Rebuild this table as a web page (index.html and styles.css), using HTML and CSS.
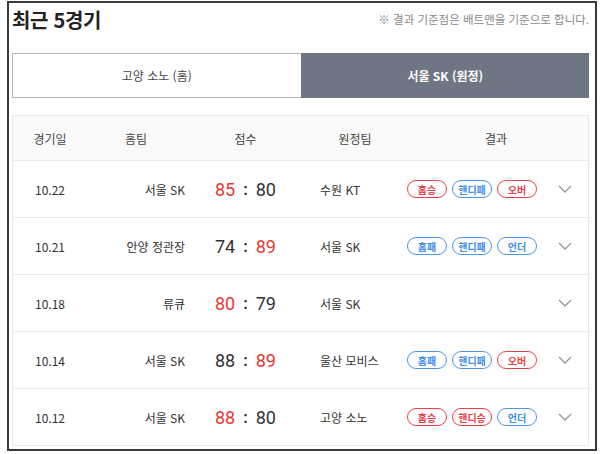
FILE: index.html
```html
<!DOCTYPE html>
<html lang="ko">
<head>
<meta charset="utf-8">
<link rel="stylesheet" href="styles.css">
</head>
<body>
<div class="frame">
  <div class="top">
    <h1 class="title">최근 5경기</h1>
    <p class="note">※ 결과 기준점은 배트맨을 기준으로 합니다.</p>
  </div>
  <div class="tabs">
    <div class="tab">고양 소노 (홈)</div>
    <div class="tab active">서울 SK (원정)</div>
  </div>
  <div class="card">
    <div class="row head">
      <div class="c-date">경기일</div>
      <div class="c-home">홈팀</div>
      <div class="c-score">점수</div>
      <div class="c-away">원정팀</div>
      <div class="c-res">결과</div>
    </div>
    <div class="row">
      <div class="c-date">10.22</div>
      <div class="c-home">서울 SK</div>
      <div class="c-score"><span class="win">85</span><b>:</b><span>80</span></div>
      <div class="c-away">수원 KT</div>
      <div class="c-res"><div class="badges"><span class="bd red">홈승</span><span class="bd blue">핸디패</span><span class="bd red">오버</span></div><span class="chev"><svg width="14" height="8" viewBox="0 0 14 8"><path d="M1 1l6 6 6-6" fill="none" stroke="#9a9a9a" stroke-width="1.4"/></svg></span></div>
    </div>
    <div class="row">
      <div class="c-date">10.21</div>
      <div class="c-home">안양 정관장</div>
      <div class="c-score"><span>74</span><b>:</b><span class="win">89</span></div>
      <div class="c-away">서울 SK</div>
      <div class="c-res"><div class="badges"><span class="bd blue">홈패</span><span class="bd blue">핸디패</span><span class="bd blue">언더</span></div><span class="chev"><svg width="14" height="8" viewBox="0 0 14 8"><path d="M1 1l6 6 6-6" fill="none" stroke="#9a9a9a" stroke-width="1.4"/></svg></span></div>
    </div>
    <div class="row">
      <div class="c-date">10.18</div>
      <div class="c-home">류큐</div>
      <div class="c-score"><span class="win">80</span><b>:</b><span>79</span></div>
      <div class="c-away">서울 SK</div>
      <div class="c-res"><div class="badges"></div><span class="chev"><svg width="14" height="8" viewBox="0 0 14 8"><path d="M1 1l6 6 6-6" fill="none" stroke="#9a9a9a" stroke-width="1.4"/></svg></span></div>
    </div>
    <div class="row">
      <div class="c-date">10.14</div>
      <div class="c-home">서울 SK</div>
      <div class="c-score"><span>88</span><b>:</b><span class="win">89</span></div>
      <div class="c-away">울산 모비스</div>
      <div class="c-res"><div class="badges"><span class="bd blue">홈패</span><span class="bd blue">핸디패</span><span class="bd red">오버</span></div><span class="chev"><svg width="14" height="8" viewBox="0 0 14 8"><path d="M1 1l6 6 6-6" fill="none" stroke="#9a9a9a" stroke-width="1.4"/></svg></span></div>
    </div>
    <div class="row">
      <div class="c-date">10.12</div>
      <div class="c-home">서울 SK</div>
      <div class="c-score"><span class="win">88</span><b>:</b><span>80</span></div>
      <div class="c-away">고양 소노</div>
      <div class="c-res"><div class="badges"><span class="bd red">홈승</span><span class="bd red">핸디승</span><span class="bd blue">언더</span></div><span class="chev"><svg width="14" height="8" viewBox="0 0 14 8"><path d="M1 1l6 6 6-6" fill="none" stroke="#9a9a9a" stroke-width="1.4"/></svg></span></div>
    </div>
  </div>
</div>
</body>
</html>
```

FILE: styles.css
```css
* { box-sizing: border-box; }
html, body { margin: 0; padding: 0; background: #fff; }
body {
  font-family: "Noto Sans CJK KR", "Noto Sans", sans-serif;
  color: #333;
}
.frame {
  margin: 1px 3px 0 7px;
  width: 590px;
  height: 450px;
  border: 2px solid #3a3a3a;
  padding: 0 6px 0 3px;
  background: #fff;
}
.top {
  display: flex;
  justify-content: space-between;
  align-items: center;
  height: 32px;
}
.title {
  margin: 0;
  font-size: 20px;
  font-weight: 700;
  color: #222;
  letter-spacing: -0.3px;
}
.note {
  margin: 0;
  font-size: 11.5px;
  color: #8a8a8a;
}
.tabs {
  display: flex;
  margin-top: 18px;
  height: 45px;
}
.tab {
  flex: 1;
  display: flex;
  align-items: center;
  justify-content: center;
  font-size: 12px;
  color: #444;
  border: 1px solid #b4b4b4;
  border-right: none;
  background: #fff;
}
.tab.active {
  background: #6f7683;
  border-color: #6f7683;
  color: #fff;
  font-weight: 700;
}
.card {
  margin-top: 17px;
  border: 1px solid #e8e8e8;
}
.row {
  display: grid;
  grid-template-columns: 74px 98px 121px 98px 1fr;
  align-items: center;
  height: 57px;
  border-top: 1px solid #ececec;
  font-size: 12px;
  color: #333;
}
.row.head {
  height: 44px;
  border-top: none;
  background: #fafafa;
  color: #444;
}
.c-date { text-align: center; }
.c-home { text-align: right; }
.head .c-home { text-align: center; }
.c-score {
  display: flex;
  justify-content: center;
  align-items: center;
  font-family: Roboto, "Noto Sans", sans-serif;
  font-size: 18px;
  color: #333;
}
.c-score b { margin: 0 8px; font-size: 16px; }
.head .c-score { font-family: inherit; font-size: 12px; color: #444; }
.c-score .win { color: #e53935; }
.c-away { padding-left: 14px; }
.head .c-away { padding-left: 0; text-align: center; }
.c-res {
  display: flex;
  align-items: center;
  justify-content: space-between;
  padding: 0 16px 0 3px;
}
.head .c-res { justify-content: center; padding: 0; }
.badges { display: flex; gap: 5px; }
.bd {
  display: inline-flex;
  align-items: center;
  justify-content: center;
  width: 40px;
  height: 18px;
  border-radius: 9px;
  border: 1.5px solid;
  font-size: 10px;
  font-weight: 700;
  background: #fff;
}
.bd.red { color: #e8404a; border-color: #e8404a; }
.bd.blue { color: #3f8ee8; border-color: #4b95ea; }
.chev { display: flex; }
```
